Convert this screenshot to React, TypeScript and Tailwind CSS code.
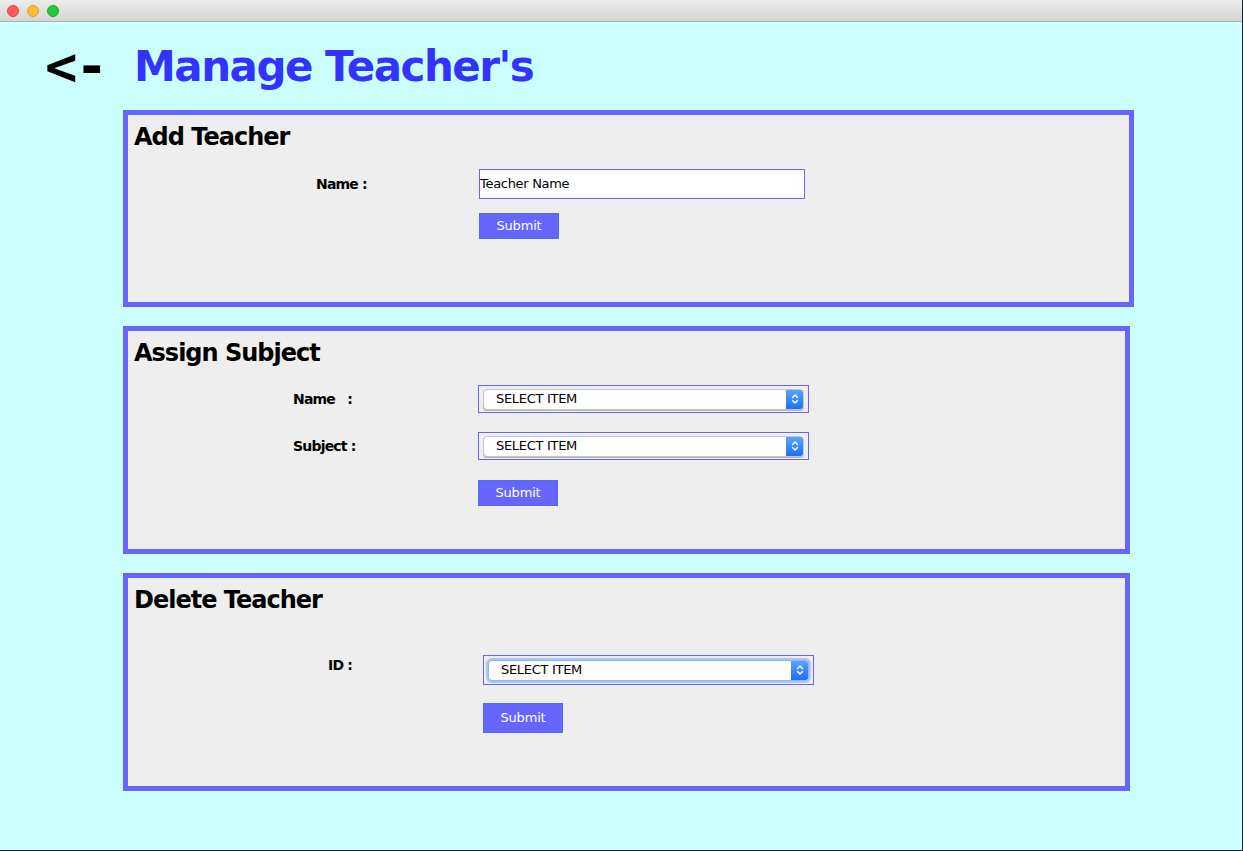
import React from 'react';

const font = { fontFamily: '"DejaVu Sans", "Liberation Sans", sans-serif' };

const Chevrons: React.FC = () => (
  <svg width="8" height="12" viewBox="0 0 8 12" fill="none" stroke="white" strokeWidth="1.4" strokeLinecap="round" strokeLinejoin="round">
    <path d="M1.5 4.5 L4 2 L6.5 4.5" />
    <path d="M1.5 7.5 L4 10 L6.5 7.5" />
  </svg>
);

const SelectBox: React.FC<{ focused?: boolean; tall?: boolean }> = ({ focused, tall }) => (
  <div className={`border border-[#6666ff] w-[331px] flex items-center px-[4px] ${tall ? 'h-[30px]' : 'h-[28px]'}`}>
    <div
      className={`flex-1 h-[21px] bg-white rounded-[4px] flex items-center overflow-hidden ${
        focused ? 'border border-[#8fb4f3] shadow-[0_0_0_2px_#a9c6f7]' : 'border border-[#c4c4c4] shadow-[0_1px_0_#b5b5b5]'
      }`}
    >
      <span className="flex-1 pl-[12px] text-[13px] tracking-[-0.3px] text-black" style={font}>SELECT ITEM</span>
      <div className="w-[17px] h-full bg-gradient-to-b from-[#5aa2ff] to-[#1a6ff5] flex items-center justify-center">
        <Chevrons />
      </div>
    </div>
  </div>
);

const SubmitButton: React.FC<{ tall?: boolean }> = ({ tall }) => (
  <button
    className={`w-[80px] bg-[#6666ff] border border-[#4f6cf7] text-white text-[13px] tracking-[-0.2px] ${tall ? 'h-[30px]' : 'h-[26px]'}`}
    style={font}
  >
    Submit
  </button>
);

const Panel: React.FC<{ title: string; width: string; height: string; children: React.ReactNode }> = ({ title, width, height, children }) => (
  <div className={`ml-[123px] border-[5px] border-[#6666ff] bg-[#eeeeee] ${width} ${height}`}>
    <h2 className="pl-[6px] pt-[6px] text-[24px] font-bold tracking-[-1px] text-black leading-[32px]" style={font}>{title}</h2>
    {children}
  </div>
);

const labelCls = 'text-[14px] font-bold tracking-[-0.8px] text-black';

const App: React.FC = () => {
  return (
    <div className="w-[1243px] h-[851px] flex flex-col overflow-hidden border-r border-b border-[#1b2233] bg-[#ccffff]">
      {/* title bar */}
      <div className="h-[22px] shrink-0 bg-gradient-to-b from-[#ececec] to-[#d4d4d4] border-b border-[#b1b1b1] flex items-center gap-[8px] pl-[7px]">
        <span className="w-[12px] h-[12px] rounded-full bg-[#fc5f57] border border-[#e0443e]" />
        <span className="w-[12px] h-[12px] rounded-full bg-[#fdbc2e] border border-[#dea123]" />
        <span className="w-[12px] h-[12px] rounded-full bg-[#28c840] border border-[#1aab29]" />
      </div>

      {/* heading */}
      <div className="h-[88px] flex items-center pl-[45px] pt-[2px]">
        <span className="text-[54px] font-bold tracking-[-2px] text-black leading-none" style={{ fontFamily: '"DejaVu Sans Mono", "Liberation Mono", monospace' }}>&lt;-</span>
        <span className="ml-[28px] text-[42px] font-bold tracking-[-1.5px] text-[#3333ff] leading-none" style={font}>Manage Teacher's</span>
      </div>

      <div className="flex flex-col gap-[19px]">
        <Panel title="Add Teacher" width="w-[1011px]" height="h-[197px]">
          <div className="flex items-center mt-[16px]">
            <span className={`w-[351px] pl-[188px] ${labelCls}`} style={font}>Name :</span>
            <div className="w-[326px] h-[30px] bg-white border border-[#6666ff] flex items-center text-[13px] tracking-[-0.3px] text-black" style={font}>
              Teacher Name
            </div>
          </div>
          <div className="pl-[351px] mt-[13px]">
            <SubmitButton />
          </div>
        </Panel>

        <Panel title="Assign Subject" width="w-[1007px]" height="h-[228px]">
          <div className="flex items-center mt-[16px]">
            <span className={`w-[350px] pl-[165px] whitespace-pre ${labelCls}`} style={font}>Name   :</span>
            <SelectBox />
          </div>
          <div className="flex items-center mt-[19px]">
            <span className={`w-[350px] pl-[165px] ${labelCls}`} style={font}>Subject :</span>
            <SelectBox />
          </div>
          <div className="pl-[350px] mt-[19px]">
            <SubmitButton />
          </div>
        </Panel>

        <Panel title="Delete Teacher" width="w-[1007px]" height="h-[218px]">
          <div className="flex items-start mt-[39px]">
            <span className={`w-[355px] pl-[200px] ${labelCls}`} style={font}>ID :</span>
            <SelectBox focused tall />
          </div>
          <div className="pl-[355px] mt-[18px]">
            <SubmitButton tall />
          </div>
        </Panel>
      </div>
    </div>
  );
};

export default App;
